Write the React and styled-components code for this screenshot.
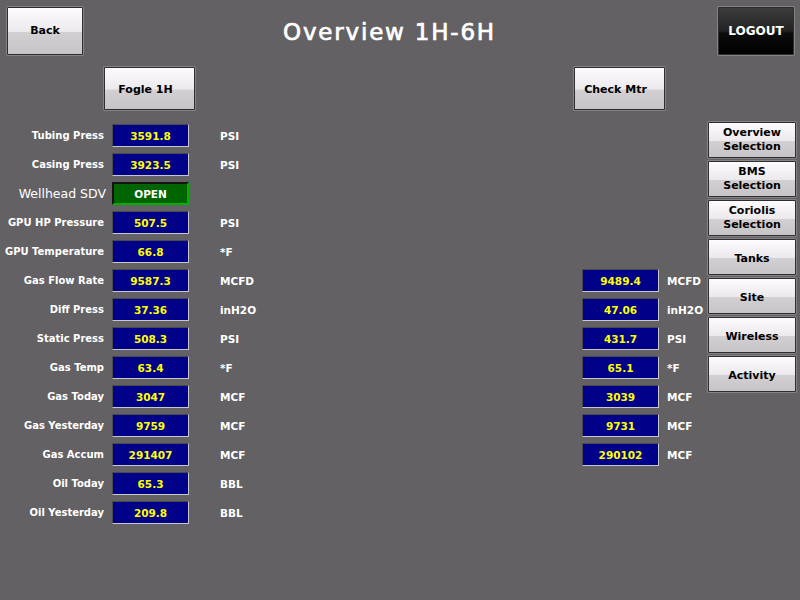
import React from "react";
import styled, { createGlobalStyle, css } from "styled-components";

const Global = createGlobalStyle`
  html, body { margin: 0; padding: 0; background: #636163; }
  body { font-family: "DejaVu Sans", "Liberation Sans", sans-serif; }
`;

const Page = styled.div`
  width: 800px;
  height: 600px;
  background: #636163;
  overflow: hidden;
  box-sizing: border-box;
  padding-top: 7px;
`;

const Header = styled.div`
  display: flex;
  align-items: center;
  height: 48px;
  padding: 0 6px 0 7px;
`;

const Title = styled.h1`
  flex: 1;
  margin: 0;
  padding: 2px 22px 0 0;
  text-align: center;
  color: #ffffff;
  font-size: 23px;
  font-weight: normal;
  letter-spacing: 1.8px;
  -webkit-text-stroke: 0.7px #ffffff;
`;

const buttonBase = css`
  box-sizing: border-box;
  border: 1px solid #2e2e2e;
  box-shadow: 0 0 0 1px #858385;
  border-radius: 1px;
  font-family: "DejaVu Sans", "Liberation Sans", sans-serif;
  font-weight: bold;
  font-size: 11px;
  line-height: 14px;
  padding: 0;
  display: flex;
  align-items: center;
  justify-content: center;
  text-align: center;
  cursor: pointer;
`;

const LightButton = styled.button`
  ${buttonBase};
  width: ${(p) => p.$w}px;
  height: ${(p) => p.$h}px;
  padding-top: ${(p) => (p.$drop ? "3px" : "0")};
  padding-right: ${(p) => (p.$shift ? "8px" : "0")};
  color: #000;
  background: linear-gradient(
    to bottom,
    #fdfbfd 0%,
    #ebe9eb 52%,
    #d2d0d2 53%,
    #c6c4c6 100%
  );
`;

const DarkButton = styled.button`
  ${buttonBase};
  width: 76px;
  height: 48px;
  color: #fff;
  font-size: 12px;
  background: linear-gradient(
    to bottom,
    #3c3c3c 0%,
    #222222 50%,
    #0c0c0c 55%,
    #000000 100%
  );
`;

const SubRow = styled.div`
  display: flex;
  align-items: flex-start;
  margin-top: 12px;
  padding-left: 104px;
  gap: 379px;
`;

const Main = styled.div`
  display: flex;
  align-items: flex-start;
  margin-top: 12px;
`;

const Data = styled.div`
  display: grid;
  grid-template-columns: 105px 84px 393px 77px 49px;
  grid-auto-rows: 23px;
  row-gap: 6px;
  padding-top: 2px;
  width: 708px;
`;

const Label = styled.div`
  grid-column: 1;
  color: #fff;
  font-size: ${(p) => (p.$big ? "12.5px" : "10px")};
  font-weight: ${(p) => (p.$big ? "normal" : "bold")};
  text-align: right;
  align-self: center;
  white-space: nowrap;
  padding-right: ${(p) => (p.$big ? "0" : "1px")};
  margin-right: ${(p) => (p.$big ? "-1px" : "0")};
`;

const ValueBox = styled.div`
  grid-column: ${(p) => p.$col};
  margin-left: ${(p) => (p.$col === 2 ? "7px" : "0")};
  width: 77px;
  box-sizing: border-box;
  height: 23px;
  background: #000088;
  border-style: solid;
  border-width: 1px;
  border-color: #4a4a4a #c8c8c8 #c8c8c8 #4a4a4a;
  color: #ffff00;
  font-size: 10.5px;
  font-weight: bold;
  display: flex;
  align-items: center;
  justify-content: center;
`;

const StatusBox = styled(ValueBox)`
  background: #006400;
  border-width: 2px;
  border-color: #141414 #00b000 #00b000 #141414;
  color: #ffffff;
`;

const Unit = styled.div`
  grid-column: ${(p) => p.$col};
  color: #fff;
  font-size: 10.5px;
  font-weight: bold;
  align-self: center;
  padding-left: ${(p) => (p.$col === 3 ? "31px" : "8px")};
  white-space: nowrap;
`;

const Nav = styled.div`
  display: flex;
  flex-direction: column;
  gap: 3px;
`;

const rows = [
  { label: "Tubing Press", value: "3591.8", unit: "PSI" },
  { label: "Casing Press", value: "3923.5", unit: "PSI" },
  { label: "Wellhead SDV", status: "OPEN" },
  { label: "GPU HP Pressure", value: "507.5", unit: "PSI" },
  { label: "GPU Temperature", value: "66.8", unit: "*F" },
  { label: "Gas Flow Rate", value: "9587.3", unit: "MCFD", rvalue: "9489.4" },
  { label: "Diff Press", value: "37.36", unit: "inH2O", rvalue: "47.06" },
  { label: "Static Press", value: "508.3", unit: "PSI", rvalue: "431.7" },
  { label: "Gas Temp", value: "63.4", unit: "*F", rvalue: "65.1" },
  { label: "Gas Today", value: "3047", unit: "MCF", rvalue: "3039" },
  { label: "Gas Yesterday", value: "9759", unit: "MCF", rvalue: "9731" },
  { label: "Gas Accum", value: "291407", unit: "MCF", rvalue: "290102" },
  { label: "Oil Today", value: "65.3", unit: "BBL" },
  { label: "Oil Yesterday", value: "209.8", unit: "BBL" },
];

const navItems = [
  ["Overview", "Selection"],
  ["BMS", "Selection"],
  ["Coriolis", "Selection"],
  ["Tanks"],
  ["Site"],
  ["Wireless"],
  ["Activity"],
];

export default function App() {
  return (
    <Page>
      <Global />
      <Header>
        <LightButton $w={76} $h={48}>Back</LightButton>
        <Title>Overview 1H-6H</Title>
        <DarkButton>LOGOUT</DarkButton>
      </Header>
      <SubRow>
        <LightButton $w={91} $h={43} $drop $shift>Fogle 1H</LightButton>
        <LightButton $w={91} $h={43} $drop $shift>Check Mtr</LightButton>
      </SubRow>
      <Main>
        <Data>
          {rows.map((r, i) => (
            <React.Fragment key={r.label}>
              <Label $big={!!r.status} style={{ gridRow: i + 1 }}>
                {r.label}
              </Label>
              {r.status ? (
                <StatusBox $col={2} style={{ gridRow: i + 1 }}>
                  {r.status}
                </StatusBox>
              ) : (
                <ValueBox $col={2} style={{ gridRow: i + 1 }}>
                  {r.value}
                </ValueBox>
              )}
              {r.unit && (
                <Unit $col={3} style={{ gridRow: i + 1 }}>
                  {r.unit}
                </Unit>
              )}
              {r.rvalue && (
                <>
                  <ValueBox $col={4} style={{ gridRow: i + 1 }}>
                    {r.rvalue}
                  </ValueBox>
                  <Unit $col={5} style={{ gridRow: i + 1 }}>
                    {r.unit}
                  </Unit>
                </>
              )}
            </React.Fragment>
          ))}
        </Data>
        <Nav>
          {navItems.map((lines) => (
            <LightButton
              key={lines.join(" ")}
              $w={88}
              $h={36}
              $drop={lines.length === 1}
            >
              <span>
                {lines.map((l, j) => (
                  <React.Fragment key={l}>
                    {j > 0 && <br />}
                    {l}
                  </React.Fragment>
                ))}
              </span>
            </LightButton>
          ))}
        </Nav>
      </Main>
    </Page>
  );
}
